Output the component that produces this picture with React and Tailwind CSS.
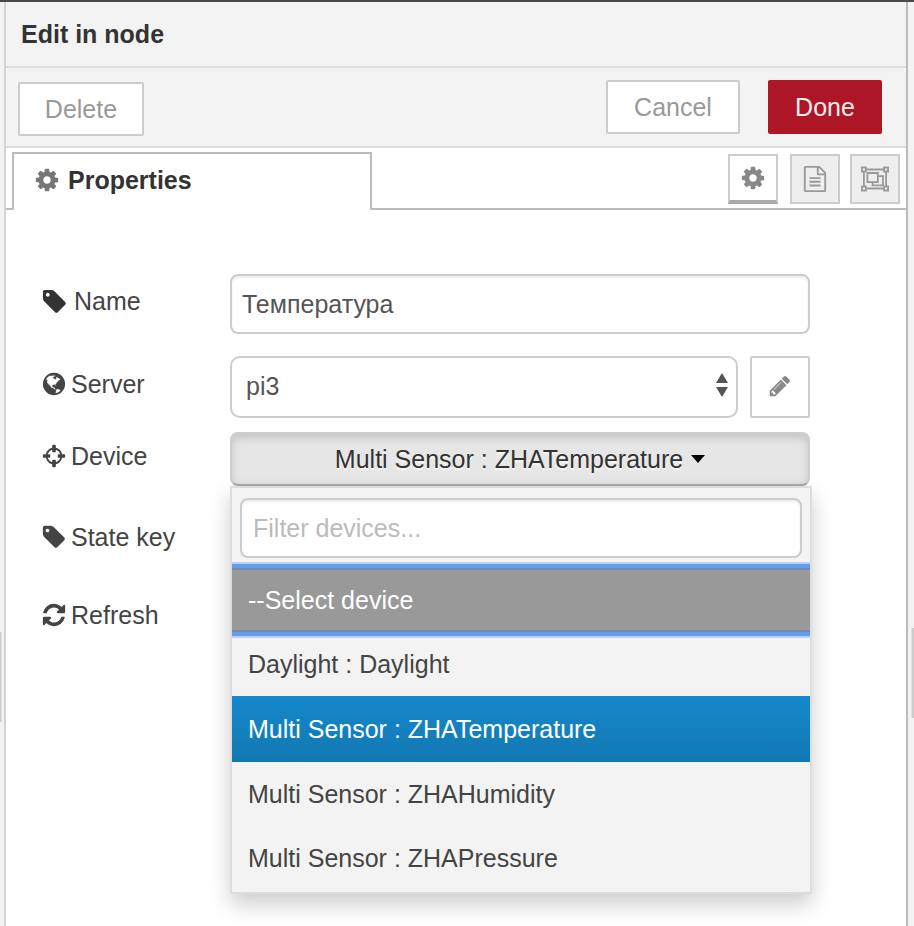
import { useState } from "react";

const PATHS = {
  cog: "M1152 896q0-106-75-181t-181-75-181 75-75 181 75 181 181 75 181-75 75-181zm512-109v222q0 12-8 23t-20 13l-185 28q-19 54-39 91 35 50 107 138 10 12 10 25t-9 23q-27 37-99 108t-94 71q-12 0-26-9l-138-108q-44 23-91 38-16 136-29 186-7 28-36 28h-222q-14 0-24.5-8.5t-11.5-21.5l-28-184q-49-16-90-37l-141 107q-10 9-25 9-14 0-25-11-126-114-165-168-7-10-7-23 0-12 8-23 15-21 51-66.5t54-70.5q-27-50-41-99l-183-27q-13-2-21-12.5t-8-23.5v-222q0-12 8-23t19-13l186-28q14-46 39-92-40-57-107-138-10-12-10-24 0-10 9-23 26-36 98.5-107.5t94.5-71.5q13 0 26 10l138 107q44-23 91-38 16-136 29-186 7-28 36-28h222q14 0 24.5 8.5t11.5 21.5l28 184q49 16 90 37l142-107q9-9 24-9 13 0 25 10 129 119 165 170 7 8 7 22 0 12-8 23-15 21-51 66.5t-54 70.5q26 50 41 98l183 28q13 2 21 12.5t8 23.5z",
  tag: "M576 448q0-53-37.5-90.5t-90.5-37.5-90.5 37.5-37.5 90.5 37.5 90.5 90.5 37.5 90.5-37.5 37.5-90.5zm1067 576q0 53-37 90l-491 492q-39 37-91 37-53 0-90-37l-715-716q-38-37-64.5-101t-26.5-117v-416q0-52 38-90t90-38h416q53 0 117 26.5t102 64.5l715 714q37 39 37 91z",
  globe: "M896 128q209 0 385.5 103t279.5 279.5 103 385.5-103 385.5-279.5 279.5-385.5 103-385.5-103-279.5-279.5-103-385.5 103-385.5 279.5-279.5 385.5-103zm274 521q-2 1-9.5 9.5t-13.5 9.5q2 0 4.5-5t5-11 3.5-7q6-7 22-15 14-6 52-12 34-8 51 11-2-2 9.5-13t14.5-12q3-2 15-4.5t15-7.5l2-22q-12 1-17.5-7t-6.5-21q0 2-6 8 0-7-4.5-8t-11.5 1-9 1q-10-3-15-7.5t-8-16.5-4-15q-2-5-9.5-11t-9.5-10q-1-2-2.5-5.5t-3-6.5-4-5.5-5.5-2.5-7 5-7.5 10-4.5 5q-3-2-6-1.5t-4.5 1-4.5 3-5 3.5q-3 2-8.5 3t-8.5 2q15-5-1-11-10-4-16-3 9-4 7.5-12t-8.5-14h5q-1-4-8.5-8.5t-17.5-8.5-13-6q-8-5-34-9.5t-33-.5q-5 6-4.5 10.5t4 14 3.5 12.5q1 6-5.5 13t-6.5 12q0 7 14 15.5t10 21.5q-3 8-16 16t-16 12q-5 8-1.5 18.5t10.5 16.5q2 2 1.5 4t-3.5 4.5-5.5 4-6.5 3.5l-3 2q-11 5-20.5-6t-13.5-26q-7-25-16-30-23-8-29 1-5-13-41-26-25-9-58-4 6-1 0-15-7-15-19-12 3-6 4-17.5t1-13.5q3-13 12-23 1-1 7-8.5t9.5-13.5.5-6q35 4 50-11 5-5 11.5-17t10.5-17q9-6 14-5.5t14.5 5.5 14.5 5q14 1 15.5-11t-7.5-20q12 1 3-17-4-7-8-9-12-4-27 5-8 4 2 8-1-1-9.5 10.5t-16.5 17.5-16-5q-1-1-5.5-13.5t-9.5-13.5q-8 0-16 15 3-8-11-15t-24-8q19-12-8-27-7-4-20.5-5t-19.5 4q-5 7-5.5 11.5t5 8 10.5 5.5 11.5 4 8.5 3q14 10 8 14-2 1-8.5 3.5t-11.5 4.5-6 4q-3 4 0 14t-2 14q-5-5-9-17.5t-7-16.5q7 9-25 6l-10-1q-4 0-16 2t-20.5 1-13.5-8q-4-8 0-20 1-4 4-2-4-3-11-9.5t-10-8.5q-46 15-94 41 6 1 12-1 5-2 13-6.5t10-5.5q34-14 42-7l5-5q14 16 20 25-7-4-30-1-20 6-22 12 7 12 5 18-4-3-11.5-10t-14.5-11-15-5q-16 0-22 1-146 80-235 222 7 7 12 8 4 1 5 9t2.5 11 11.5-3q9 8 3 19 1-1 44 27 19 17 21 21 3 11-10 18-1-2-9-9t-9-4q-3 5 .5 18.5t10.5 12.5q-7 0-9.5 16t-2.5 35.5-1 23.5l2 1q-3 12 5.5 34.5t21.5 19.5q-13 3 20 43 6 8 8 9 3 2 12 7.5t15 10 10 10.5q4 5 10 22.5t14 23.5q-2 6 9.5 20t10.5 23q-1 0-2.5 1t-2.5 1q3 7 15.5 14t15.5 13q1 3 2 10t3 11 8 2q2-20-24-62-15-25-17-29-3-5-5.5-15.5t-4.5-14.5q2 0 6 1.5t8.5 3.5 7.5 4 2 3q-3 7 2 17.5t12 18.5 17 19 12 13q6 6 14 19.5t0 13.5q9 0 20 10.5t17 19.5q5 8 8 26t5 24q2 7 8.5 13.5t12.5 9.5l16 8 13 7q5 2 18.5 10.5t21.5 11.5q10 4 16 4t14.5-2.5 13.5-3.5q15-2 29 15t21 21q36 19 55 11-2 1 .5 7.5t8 15.5 9 14.5 5.5 8.5q5 6 18 15t18 15q6-4 7-9-3 8 7 20t18 10q14-3 14-32-31 15-49-18 0-1-2.5-5.5t-4-8.5-2.5-8.5 0-7.5 5-3q9 0 10-3.5t-2-12.5-4-13q-1-8-11-20t-12-15q-5 9-16 8t-16-9q0 1-1.5 5.5t-1.5 6.5q-13 0-15-1 1-3 2.5-17.5t3.5-22.5q1-4 5.5-12t7.5-14.5 4-12.5-4.5-9.5-17.5-2.5q-19 1-26 20-1 3-3 10.5t-5 11.5-9 7q-7 3-24 2t-24-5q-13-8-22.5-29t-9.5-37q0-10 2.5-26.5t3-25-5.5-24.5q3-2 9-9.5t10-10.5q2-1 4.5-1.5t4.5 0 4-1.5 3-6q-1-1-4-3-3-3-4-3 7 3 28.5-1.5t27.5 1.5q15 11 22-2 0-1-2.5-9.5t-.5-13.5q5 27 29 9 3 3 15.5 5t17.5 5q3 2 7 5.5t5.5 4.5 5-.5 8.5-6.5q10 14 12 24 11 40 19 44 7 3 11 2t4.5-9.5 0-14-1.5-12.5l-1-8v-18l-1-8q-15-3-18.5-12t1.5-18.5 15-18.5q1-1 8-3.5t15.5-6.5 12.5-8q21-19 15-35 7 0 11-9-1 0-5-3t-7.5-5-4.5-2q9-5 2-16 5-3 7.5-11t7.5-10q9 12 21 2 7-8 1-16 5-7 20.5-10.5t18.5-9.5q7 2 8-2t1-12 3-12q4-5 15-9t13-5l17-11q3-4 0-4 18 2 31-11 10-11-6-20 3-6-3-9.5t-15-5.5q3-1 11.5-.5t10.5-1.5q15-10-7-16-17-5-43 12zm-163 877q206-36 351-189-3-3-12.5-4.5t-12.5-3.5q-18-7-24-8 1-7-2.5-13t-8-9-12.5-8-11-7q-2-2-7-6t-7-5.5-7.5-4.5-8.5-2-10 1l-3 1q-3 1-5.5 2.5t-5.5 3-4 3 0 2.5q-21-17-36-22-5-1-11-5.5t-10.5-7-10-1.5-11.5 7q-5 5-6 15t-2 13q-7-5 0-17.5t2-18.5q-3-6-10.5-4.5t-12 4.5-11.5 8.5-9 6.5-8.5 5.5-8.5 7.5q-3 4-6 12t-5 11q-2-4-11.5-6.5t-9.5-5.5q2 10 4 35t5 38q7 31-12 48-27 25-29 40-4 22 12 26 0 7-8 20.5t-7 21.5q0 6 2 16z",
  crosshairs: "M1325 1024h-109q-26 0-45-19t-19-45v-128q0-26 19-45t45-19h109q-32-108-112.5-188.5t-188.5-112.5v109q0 26-19 45t-45 19h-128q-26 0-45-19t-19-45v-109q-108 32-188.5 112.5t-112.5 188.5h109q26 0 45 19t19 45v128q0 26-19 45t-45 19h-109q32 108 112.5 188.5t188.5 112.5v-109q0-26 19-45t45-19h128q26 0 45 19t19 45v109q108-32 188.5-112.5t112.5-188.5zm339-192v128q0 26-19 45t-45 19h-143q-37 161-154.5 278.5t-278.5 154.5v143q0 26-19 45t-45 19h-128q-26 0-45-19t-19-45v-143q-161-37-278.5-154.5t-154.5-278.5h-143q-26 0-45-19t-19-45v-128q0-26 19-45t45-19h143q37-161 154.5-278.5t278.5-154.5v-143q0-26 19-45t45-19h128q26 0 45 19t19 45v143q161 37 278.5 154.5t154.5 278.5h143q26 0 45 19t19 45z",
  refresh: "M1639 1056q0 5-1 7-64 268-268 434.5t-478 166.5q-146 0-282.5-55t-243.5-157l-129 129q-19 19-45 19t-45-19-19-45v-448q0-26 19-45t45-19h448q26 0 45 19t19 45-19 45l-137 137q71 66 161 102t187 36q134 0 250-65t186-179q11-17 53-117 8-23 30-23h192q13 0 22.5 9.5t9.5 22.5zm25-800v448q0 26-19 45t-45 19h-448q-26 0-45-19t-19-45 19-45l138-138q-148-137-349-137-134 0-250 65t-186 179q-11 17-53 117-8 23-30 23h-199q-13 0-22.5-9.5t-9.5-22.5v-7q65-268 270-434.5t480-166.5q146 0 284 55.5t245 156.5l130-129q19-19 45-19t45 19 19 45z",
  pencil: "M491 1536l91-91-235-235-91 91v107h128v128h107zm523-928q0-22-22-22-10 0-17 7l-542 542q-7 7-7 17 0 22 22 22 10 0 17-7l542-542q7-7 7-17zm-54-192l416 416-832 832h-416v-416zm683 96q0 53-37 90l-166 166-416-416 166-165q36-38 90-38 53 0 91 38l235 234q37 39 37 91z",
  file: "M1596 380q28 28 48 76t20 88v1152q0 40-28 68t-68 28h-1344q-40 0-68-28t-28-68v-1600q0-40 28-68t68-28h896q40 0 88 20t76 48zm-444-244v376h376q-10-29-22-41l-313-313q-12-12-41-22zm384 1528v-1024h-416q-40 0-68-28t-28-68v-416h-768v1536h1280zm-1024-864q0-14 9-23t23-9h704q14 0 23 9t9 23v64q0 14-9 23t-23 9h-704q-14 0-23-9t-9-23v-64zm736 224q14 0 23 9t9 23v64q0 14-9 23t-23 9h-704q-14 0-23-9t-9-23v-64q0-14 9-23t23-9h704zm0 256q14 0 23 9t9 23v64q0 14-9 23t-23 9h-704q-14 0-23-9t-9-23v-64q0-14 9-23t23-9h704z",
};

function Icon({ name, className = "size-[26px]" }) {
  return (
    <svg viewBox="0 0 1792 1792" fill="currentColor" aria-hidden="true" className={`shrink-0 ${className}`}>
      <path d={PATHS[name]} />
    </svg>
  );
}

function GroupIcon() {
  return (
    <svg viewBox="0 0 30 26" fill="none" stroke="currentColor" strokeWidth="1.8" aria-hidden="true" className="h-[26px] w-[30px] shrink-0">
      <path d="M6.5 3.5H23.5M6.5 22.5H23.5M3.9 6V20M26.1 6V20" />
      <path d="M1.9 1.5h4v4h-4zM24.1 1.5h4v4h-4zM1.9 20.5h4v4h-4zM24.1 20.5h4v4h-4z" />
      <path d="M7.4 7h10.4v9.2H7.4z" />
      <path d="M18 10.2h5v9.2H12.6V16.4" />
    </svg>
  );
}

function FieldRow({ icon, iconClass, label, htmlFor, className = "", children }) {
  return (
    <div className={`flex items-center ${className}`}>
      <label htmlFor={htmlFor} className="flex w-[189px] shrink-0 items-center gap-1 pb-1.5 text-[#444]">
        <Icon name={icon} className={iconClass} />
        {label}
      </label>
      <div className="relative flex min-w-0 flex-1 gap-3">{children}</div>
    </div>
  );
}

const DEVICES = [
  "Daylight : Daylight",
  "Multi Sensor : ZHATemperature",
  "Multi Sensor : ZHAHumidity",
  "Multi Sensor : ZHAPressure",
];

const field = "w-full min-w-0 border-2 border-[#ccc] bg-white text-[#555] outline-none";
const inset = "shadow-[inset_0_2px_2px_rgba(0,0,0,0.07)]";
const tool = "flex size-[50px] items-center justify-center border-2 border-[#ccc]";

export default function App() {
  const [name, setName] = useState("Температура");
  const [filter, setFilter] = useState("");
  const [device, setDevice] = useState("Multi Sensor : ZHATemperature");
  const shown = DEVICES.filter((d) => d.toLowerCase().includes(filter.toLowerCase()));

  return (
    <div className="flex min-h-screen border-t-2 border-[#4a4a4c] bg-[#f3f3f3] font-['Liberation_Sans',Arial,sans-serif] text-[25px] leading-8">
      <div className="w-1 shrink-0 pt-[630px]">
        <div className="h-[90px] w-0.5 border-r border-[#e2e2e2] bg-[#ccc]" />
      </div>
      <main className="min-w-0 flex-1 border-r-2 border-l-2 border-r-[#bbb] border-l-[#d4d4d4] bg-white">
        <header className="flex h-[66px] items-center border-b-2 border-[#ddd] bg-[#f3f3f3] px-[15px]">
          <h1 className="font-bold text-[#333]">Edit in node</h1>
        </header>
        <div className="flex h-20 items-start border-b-2 border-[#ddd] bg-[#f3f3f3] pt-3 pr-6 pl-3">
          <button type="button" className="mt-0.5 h-[54px] w-[126px] rounded-xs border-2 border-[#ccc] bg-white text-[#999]">Delete</button>
          <button type="button" className="ml-auto h-[54px] w-[134px] rounded-xs border-2 border-[#ccc] bg-white text-[#999]">Cancel</button>
          <button type="button" className="ml-7 h-[54px] w-[114px] rounded-xs bg-[#ad1625] text-[#eee]">Done</button>
        </div>
        <div className="flex pt-1">
          <div className="w-1.5 shrink-0 border-b-2 border-[#bbb]" />
          <div className="flex h-[58px] w-[360px] items-start gap-2 border-2 border-b-0 border-[#bbb] px-5 pt-2.5 font-bold text-[#333]">
            <span className="flex h-8 items-center text-[#777]">
              <Icon name="cog" />
            </span>
            Properties
          </div>
          <div className="flex flex-1 justify-end border-b-2 border-[#bbb] pt-0.5 pr-1.5 text-[#999]">
            <button type="button" aria-label="Properties" className={`${tool} mr-3 border-b-4 border-b-[#aaa] bg-white text-[#888]`}>
              <Icon name="cog" />
            </button>
            <button type="button" aria-label="Description" className={`${tool} mr-2.5 bg-[#eee]`}>
              <Icon name="file" />
            </button>
            <button type="button" aria-label="Appearance" className={`${tool} bg-[#eee]`}>
              <GroupIcon />
            </button>
          </div>
        </div>
        <form className="pt-16 pr-24 pl-[35px]" onSubmit={(e) => e.preventDefault()}>
          <FieldRow icon="tag" label="Name" htmlFor="name" iconClass="mr-0.5 size-[27px] text-[#333]">
            <input id="name" value={name} onChange={(e) => setName(e.target.value)} className={`${field} ${inset} h-[60px] rounded-lg px-2.5`} />
          </FieldRow>
          <FieldRow icon="globe" label="Server" htmlFor="server" className="mt-[22px]">
            <div className="relative min-w-0 flex-1">
              <select id="server" className={`${field} h-[62px] appearance-none rounded-[10px] px-3.5 pb-0.5`}>
                <option>pi3</option>
              </select>
              <svg viewBox="0 0 12 24" fill="#555" aria-hidden="true" className="pointer-events-none absolute top-[17px] right-2.5 h-6 w-3">
                <path d="M6 0l6 10H0zM6 24l6-10H0z" />
              </svg>
            </div>
            <button type="button" aria-label="Edit server" className="flex h-[62px] w-[60px] shrink-0 items-center justify-center rounded-xs border-2 border-[#ccc] bg-white pb-0.5 text-[#888]">
              <Icon name="pencil" className="size-6" />
            </button>
          </FieldRow>
          <FieldRow icon="crosshairs" label="Device" htmlFor="device" className="mt-3.5">
            <button id="device" type="button" className="flex h-[54px] w-full items-center justify-center gap-2 rounded-lg border-2 border-[#ccc] border-b-[#a8a8a8] bg-[#e6e6e6] text-[#333] shadow-[inset_0_4px_8px_rgba(0,0,0,0.15)] [text-shadow:0_2px_2px_rgba(255,255,255,0.75)]">
              {device}
              <svg viewBox="0 0 14 8" fill="#000" aria-hidden="true" className="h-2 w-3.5">
                <path d="M0 0h14L7 8z" />
              </svg>
            </button>
            <div className="absolute top-full left-0 z-10 -right-0.5 border-2 border-[#ddd] bg-[#f3f3f3] pt-2.5 pb-0.5 shadow-[0_10px_20px_rgba(0,0,0,0.2)]">
              <div className="px-2">
                <input aria-label="Filter devices" placeholder="Filter devices..." value={filter} onChange={(e) => setFilter(e.target.value)} className={`${field} ${inset} block h-[60px] rounded-lg px-[11px] placeholder:text-[#bbb]`} />
              </div>
              <ul className="overflow-hidden pt-2.5">
                <li>
                  <button type="button" onClick={() => setDevice("--Select device")} className="relative block h-16 w-full bg-[#999] px-4 text-left text-white shadow-[inset_0_2px_#7289ac,inset_0_-2px_#7289ac,0_0_0_4px_#659cf0,0_0_0_6px_#b9cfef]">
                    --Select device
                  </button>
                </li>
                {shown.map((d) => (
                  <li key={d}>
                    <button
                      type="button"
                      onClick={() => setDevice(d)}
                      className={
                        d === device
                          ? "block h-[66px] w-full bg-linear-to-b from-[#1589cc] to-[#1278b2] px-4 text-left text-white"
                          : "block h-16 w-full px-4 text-left text-[#444]"
                      }
                    >
                      {d}
                    </button>
                  </li>
                ))}
              </ul>
            </div>
          </FieldRow>
          <FieldRow icon="tag" label="State key" htmlFor="state" className="mt-[30px]">
            <input id="state" className={`${field} h-12 rounded-lg px-2.5`} />
          </FieldRow>
          <FieldRow icon="refresh" label="Refresh" htmlFor="refresh" className="mt-[30px]">
            <input id="refresh" className={`${field} h-12 rounded-lg px-2.5`} />
          </FieldRow>
        </form>
      </main>
      <div className="flex w-1.5 shrink-0 justify-end pt-[626px]">
        <div className="h-[90px] w-[3px] border-l border-[#e2e2e2] bg-[#ccc]" />
      </div>
    </div>
  );
}
